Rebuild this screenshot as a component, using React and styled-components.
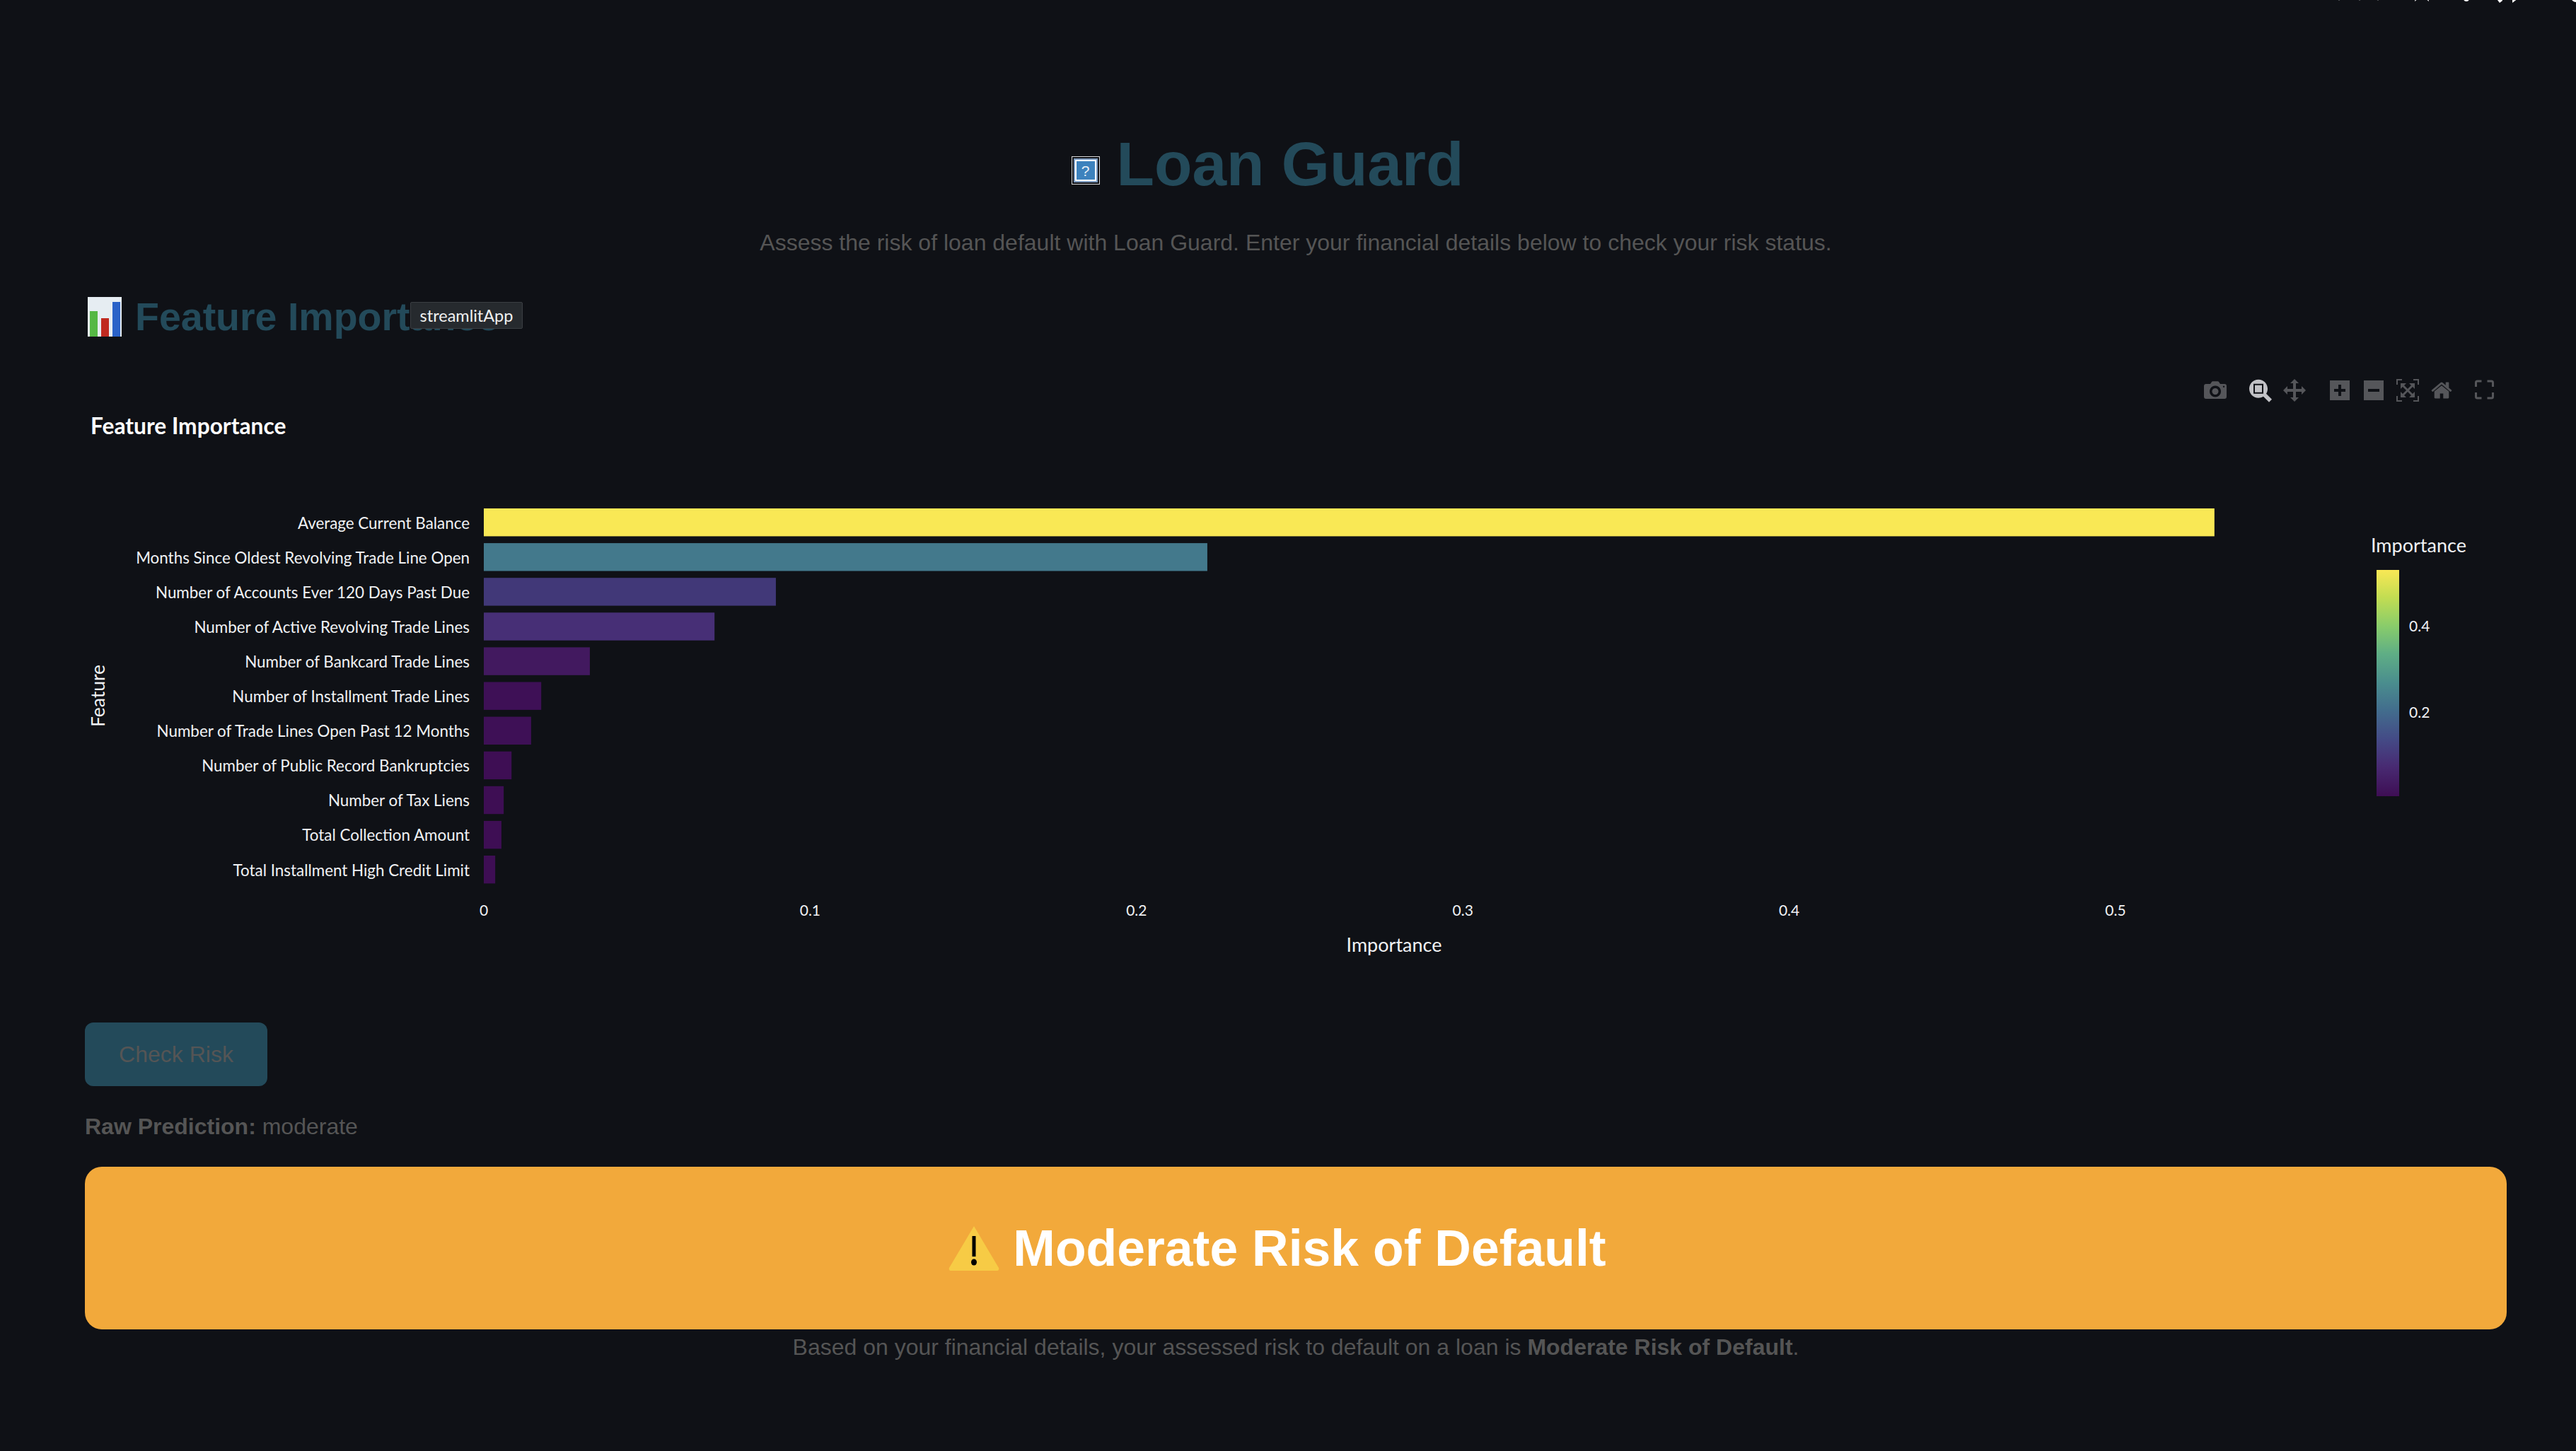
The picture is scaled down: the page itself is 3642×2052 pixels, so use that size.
import React from 'react'
import styled, { createGlobalStyle } from 'styled-components'

const GlobalStyle = createGlobalStyle`
  html, body {
    margin: 0;
    padding: 0;
    background: #0f1116;
  }
  body {
    font-family: "Liberation Sans", Arial, sans-serif;
  }
`

const features = [
  { name: 'Average Current Balance', value: 0.5303, color: '#f9e855' },
  { name: 'Months Since Oldest Revolving Trade Line Open', value: 0.2217, color: '#43798c' },
  { name: 'Number of Accounts Ever 120 Days Past Due', value: 0.0895, color: '#413878' },
  { name: 'Number of Active Revolving Trade Lines', value: 0.0707, color: '#472f76' },
  { name: 'Number of Bankcard Trade Lines', value: 0.0325, color: '#42195f' },
  { name: 'Number of Installment Trade Lines', value: 0.0176, color: '#3e1056' },
  { name: 'Number of Trade Lines Open Past 12 Months', value: 0.0145, color: '#3e1056' },
  { name: 'Number of Public Record Bankruptcies', value: 0.0085, color: '#3e0e54' },
  { name: 'Number of Tax Liens', value: 0.0061, color: '#3e0e54' },
  { name: 'Total Collection Amount', value: 0.0054, color: '#3e0e54' },
  { name: 'Total Installment High Credit Limit', value: 0.0035, color: '#3e0e54' },
]

const ticks = [0, 0.1, 0.2, 0.3, 0.4, 0.5]

const X0 = 564
const PER_UNIT = 4614
const BAR_TOP = 219
const BAR_PITCH = 49.1
const BAR_H = 39.4

const Page = styled.main`
  position: relative;
  width: 3642px;
  height: 2052px;
  overflow: hidden;
  box-sizing: border-box;
  padding: 185px 98px 0 120px;
  color: #555;
`

const TopBar = styled.div`
  position: absolute;
  top: -20px;
  right: 0;
  height: 24px;
  width: 362px;
`

const Title = styled.h1`
  display: flex;
  align-items: center;
  justify-content: center;
  gap: 24px;
  margin: 0;
  padding-right: 80px;
  font-size: 87.500px;
  line-height: 94px;
  font-weight: 700;
  color: #234a5a;
`

const GlyphBox = styled.span`
  display: flex;
  box-sizing: border-box;
  width: 40px;
  height: 40px;
  margin-top: 18px;
  padding: 3px;
  border: 1px solid #d8d8d8;
`

const GlyphInner = styled.span`
  flex: 1;
  display: flex;
  align-items: center;
  justify-content: center;
  box-sizing: border-box;
  border: 3px solid #fff;
  outline: 2px solid #7d9bc0;
  outline-offset: -1px;
  background: #3d82bd;
  color: #e8eff6;
  font-size: 21px;
  line-height: 1;
  font-weight: 400;
`

const Subtitle = styled.p`
  margin: 42px 0 0;
  text-align: center;
  font-size: 32px;
  line-height: 44px;
  color: #555;
`

const SectionHeading = styled.h2`
  position: relative;
  display: flex;
  align-items: center;
  gap: 19px;
  margin: 50px 0 0 4px;
  font-size: 55.500px;
  line-height: 66px;
  font-weight: 700;
  color: #234a5a;
`

const Tooltip = styled.span`
  position: absolute;
  left: 456px;
  top: 12px;
  box-sizing: border-box;
  width: 159px;
  height: 38px;
  border: 1px solid #3a3e42;
  border-radius: 2px;
  background: #262a2e;
  color: #f0f0f0;
  font-family: Lato, sans-serif;
  font-size: 23.500px;
  font-weight: 400;
  line-height: 36px;
  text-align: center;
`

const ChartWrap = styled.section`
  position: relative;
  margin-top: 19px;
  height: 900px;
`

const ChartSvg = styled.svg`
  display: block;
  font-family: Lato, sans-serif;
`

const Modebar = styled.div`
  position: absolute;
  top: 36px;
  left: 2996px;
  display: flex;
  gap: 32px;
`

const ModeGroup = styled.div`
  display: flex;
  gap: 16px;
`

const ModeIcon = styled.svg`
  display: block;
  width: 32px;
  height: 32px;
  overflow: visible;
  fill: ${p => (p.$active ? '#c2c2c6' : '#55565a')};
`

const CheckButton = styled.button`
  display: block;
  width: 258px;
  height: 90px;
  margin-top: 46px;
  padding: 0;
  border: 0;
  border-radius: 12px;
  background: #234a5a;
  color: #555;
  font-family: inherit;
  font-size: 32px;
`

const RawLine = styled.p`
  margin: 35px 0 0;
  font-size: 32px;
  line-height: 44px;
  color: #555;
`

const Banner = styled.div`
  display: flex;
  align-items: center;
  justify-content: center;
  gap: 19px;
  height: 230px;
  margin-top: 35px;
  padding-right: 52px;
  border-radius: 24px;
  background: #f2a93b;
  color: #fff;
  font-size: 71.500px;
  font-weight: 700;
`

const Footnote = styled.p`
  margin: 3px 0 0;
  text-align: center;
  font-size: 32px;
  line-height: 44px;
  color: #555;
`

const CameraIcon = () => (
  <ModeIcon viewBox="0 0 32 32">
    <path
      fillRule="evenodd"
      d="M3 6h6l2-3q.5-.8 1.5-.8h7q1 0 1.5.8l2 3h6q3 0 3 3v15q0 3-3 3H3q-3 0-3-3V9q0-3 3-3z M16 8.500a8 8 0 1 0 .01 0z M16 12a4.500 4.500 0 1 1-.01 0z M28 8.500a1.200 1.200 0 1 0 .01 0z"
      transform="translate(0 1)"
    />
  </ModeIcon>
)

const PlotlyIcon = ({ d, width = 1000, ascent = 850, active }) => (
  <ModeIcon viewBox={`0 0 ${width} 1000`} $active={active}>
    <path d={d} transform={`matrix(1 0 0 -1 0 ${ascent})`} />
  </ModeIcon>
)

const FullscreenIcon = () => (
  <ModeIcon viewBox="1.500 0 32 32">
    <path
      d="M2 11V5q0-2 2-2h6M18 3h6q2 0 2 2v6M26 19v6q0 2-2 2h-6M10 27H4q-2 0-2-2v-6"
      fill="none"
      stroke="#55565a"
      strokeWidth="3"
    />
  </ModeIcon>
)

const BarEmoji = () => (
  <svg width="48" height="56" viewBox="0 0 48 56">
    <rect width="48" height="56" fill="#e6edf2" />
    <rect x="3" y="20" width="11" height="36" fill="#55b844" />
    <rect x="19" y="30" width="11" height="26" fill="#c02a20" />
    <rect x="35" y="7" width="11" height="49" fill="#2a62c8" />
  </svg>
)

const WarnEmoji = () => (
  <svg width="72" height="64" viewBox="0 0 72 64">
    <path d="M36 1L71 60q1 4-3 4H4q-4 0-3-4z" fill="#f7cb45" />
    <rect x="33.500" y="15" width="5" height="29" fill="#000" />
    <ellipse cx="36" cy="52" rx="4" ry="4.500" fill="#000" />
  </svg>
)

const Chart = () => (
  <ChartSvg width="3424" height="900" viewBox="0 0 3424 900">
    <defs>
      <linearGradient id="viridis" x1="0" y1="1" x2="0" y2="0">
        <stop offset="0" stopColor="#3e0e54" />
        <stop offset="0.13" stopColor="#482a72" />
        <stop offset="0.25" stopColor="#444a86" />
        <stop offset="0.38" stopColor="#426d8d" />
        <stop offset="0.5" stopColor="#4a8d8e" />
        <stop offset="0.63" stopColor="#5fae85" />
        <stop offset="0.75" stopColor="#88cc6b" />
        <stop offset="0.88" stopColor="#c3dd52" />
        <stop offset="1" stopColor="#f9e855" />
      </linearGradient>
    </defs>

    <text x="8" y="114" fontSize="31.700" fontWeight="700" fill="#fff">Feature Importance</text>

    {features.map((f, i) => (
      <g key={f.name}>
        <text
          x={X0 - 20}
          y={BAR_TOP + i * BAR_PITCH + 28.5}
          textAnchor="end"
          fontSize="22.400"
          fill="#f0f1f4"
        >
          {f.name}
        </text>
        <rect
          x={X0}
          y={BAR_TOP + i * BAR_PITCH}
          width={f.value * PER_UNIT}
          height={BAR_H}
          fill={f.color}
        />
      </g>
    ))}

    <text
      transform="translate(28 484) rotate(-90)"
      textAnchor="middle"
      fontSize="26.500"
      fill="#f0f1f4"
    >
      Feature
    </text>

    {ticks.map(t => (
      <text key={t} x={X0 + t * PER_UNIT} y={795} textAnchor="middle" fontSize="21" fill="#f0f1f4">
        {t}
      </text>
    ))}
    <text x="1851" y="846" textAnchor="middle" fontSize="27" fill="#f0f1f4">Importance</text>

    <text x="3232" y="281" fontSize="27" fill="#f0f1f4">Importance</text>
    <rect x="3240" y="306" width="32" height="320" fill="url(#viridis)" />
    <text x="3286" y="393" fontSize="21" fill="#f0f1f4">0.4</text>
    <text x="3286" y="515" fontSize="21" fill="#f0f1f4">0.2</text>
  </ChartSvg>
)

const App = () => (
  <Page>
    <GlobalStyle />
    <TopBar>
      <svg width="362" height="24" viewBox="0 0 362 24">
        <g fill="#8a8a8a">
          <circle cx="27" cy="19" r="1.500" />
          <circle cx="56" cy="19" r="1.500" />
          <circle cx="82" cy="19" r="1.500" />
        </g>
        <g fill="#fff">
          <path d="M134 24l10-8 10 8-2-10h-16z" transform="translate(0 -2)" />
          <circle cx="207" cy="18" r="4" />
          <path d="M254 24l4-3-1-6-6 5zM272 14v10l8-6z" />
          <circle cx="362" cy="16" r="7" />
        </g>
      </svg>
    </TopBar>

    <Title>
      <GlyphBox><GlyphInner>?</GlyphInner></GlyphBox>
      Loan Guard
    </Title>
    <Subtitle>Assess the risk of loan default with Loan Guard. Enter your financial details below to check your risk status.</Subtitle>

    <SectionHeading>
      <BarEmoji />
      Feature Importance
      <Tooltip>streamlitApp</Tooltip>
    </SectionHeading>

    <ChartWrap>
      <Chart />
      <Modebar>
        <ModeGroup>
          <CameraIcon />
        </ModeGroup>
        <ModeGroup>
          <PlotlyIcon
            active
            ascent={875}
            d="m1000-25l-250 251c40 63 63 138 63 218 0 224-182 406-407 406-224 0-406-182-406-406s183-406 407-406c80 0 155 22 218 62l250-250 125 125z m-812 250l0 438 437 0 0-438-437 0z m62 375l313 0 0-312-313 0 0 312z"
          />
          <PlotlyIcon d="m1000 350l-187 188 0-125-250 0 0 250 125 0-188 187-187-187 125 0 0-250-250 0 0 125-188-188 186-187 0 125 252 0 0-250-125 0 187-188 188 188-125 0 0 250 250 0 0-126 187 188z" />
        </ModeGroup>
        <ModeGroup>
          <PlotlyIcon width={875} d="m1 787l0-875 875 0 0 875-875 0z m687-500l-187 0 0-187-125 0 0 187-188 0 0 125 188 0 0 187 125 0 0-187 187 0 0-125z" />
          <PlotlyIcon width={875} d="m0 788l0-876 875 0 0 876-875 0z m688-500l-500 0 0 125 500 0 0-125z" />
          <PlotlyIcon d="m250 850l-187 0-63 0 0-62 0-188 63 0 0 188 187 0 0 62z m688 0l-188 0 0-62 188 0 0-188 62 0 0 188 0 62-62 0z m-875-938l0 188-63 0 0-188 0-62 63 0 187 0 0 62-187 0z m875 188l0-188-188 0 0-62 188 0 62 0 0 62 0 188-62 0z m-125 188l-1 0-93-94-156 156 156 156 92-93 2 0 0 250-250 0 0-2 93-92-156-156-156 156 94 92 0 2-250 0 0-250 0 0 93 93 157-156-157-156-93 94 0 0 0-250 250 0 0 0-94 93 156 157 156-157-93-93 0 0 250 0 0 250z" />
          <PlotlyIcon width={928.6} d="m786 296v-267q0-15-11-26t-25-10h-214v214h-143v-214h-214q-15 0-25 10t-11 26v267q0 1 0 2t0 2l321 264 321-264q1-1 1-4z m124 39l-34-41q-5-5-12-6h-2q-7 0-12 3l-386 322-386-322q-7-4-13-4-7 2-12 7l-35 41q-4 5-3 13t6 12l401 334q18 15 42 15t43-15l136-114v109q0 8 5 13t13 5h107q8 0 13-5t5-13v-227l122-102q5-5 6-12t-4-13z" />
        </ModeGroup>
        <ModeGroup>
          <FullscreenIcon />
        </ModeGroup>
      </Modebar>
    </ChartWrap>

    <CheckButton type="button">Check Risk</CheckButton>
    <RawLine><strong>Raw Prediction:</strong> moderate</RawLine>
    <Banner>
      <WarnEmoji />
      Moderate Risk of Default
    </Banner>
    <Footnote>
      Based on your financial details, your assessed risk to default on a loan is <strong>Moderate Risk of Default</strong>.
    </Footnote>
  </Page>
)

export default App
